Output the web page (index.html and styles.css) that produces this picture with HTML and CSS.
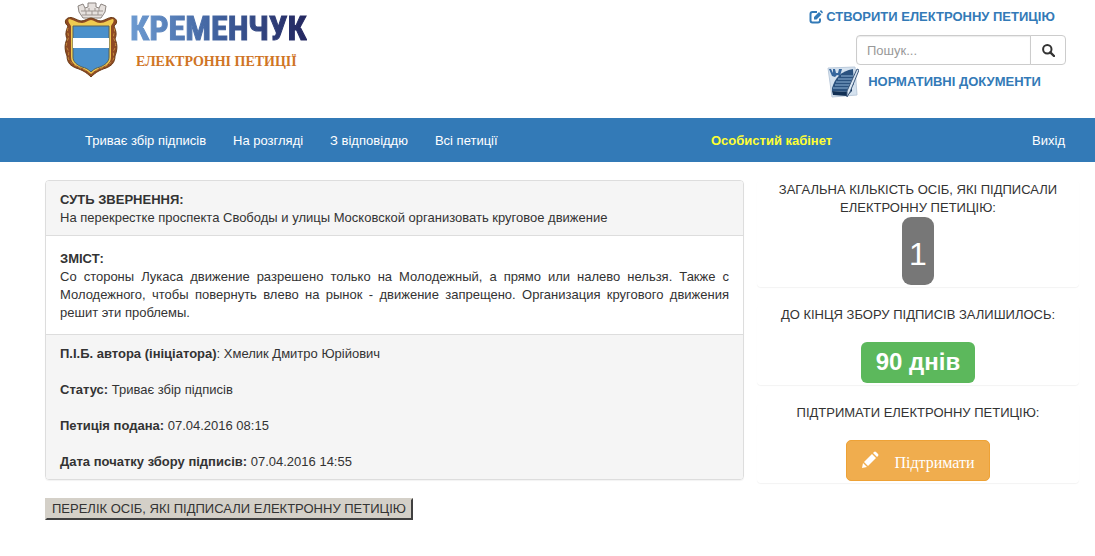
FILE: index.html
```html
<!DOCTYPE html>
<html lang="uk">
<head>
  <meta charset="UTF-8">
  <meta name="viewport" content="width=device-width, initial-scale=1">
  <title>Електронні петиції - Кременчук</title>
  <link rel="stylesheet" href="styles.css">
</head>
<body>
  <header class="header">
    <a href="#" class="logo">
      <svg class="logo-crest" viewBox="0 0 56 76" aria-hidden="true">
        <!-- crown -->
        <path d="M14 4l5-2 2 4 3-1V1h8v4l3 1 2-4 5 2-1 6-4 6H19l-4-6z" fill="#e6e1de" stroke="#8b8480" stroke-width="1"/>
        <path d="M17 9h22M18 13h20M21 6v3M25 6v3M31 6v3M35 6v3M22 9v4M28 9v4M34 9v4" stroke="#9d9591" stroke-width="1" fill="none"/>
        <!-- cartouche -->
        <path d="M4 16c4-2 8 2 13 3 4 0 7-3 10-3s6 3 10 3c5-1 9-5 13-3 4 2 3 6 0 8 2 5 3 8 1 13 3 6 2 12 0 17 0 7-4 10-9 12-6 2-10 4-15 9-5-5-9-7-15-9-5-2-9-5-9-12-2-5-3-11 0-17-2-5-1-8 1-13-3-2-4-6 0-8z" fill="#8f4a24" stroke="#6b3d16" stroke-width="1"/>
        <path d="M4 26c-2 4 2 7 0 11s-2 8 0 11-1 7 1 10 5 5 9 7 9 3 13 7c4-4 9-5 13-7s7-4 9-7-1-7 1-10 2-7 0-11 2-7 0-11" fill="none" stroke="#c58a3c" stroke-width="1" stroke-dasharray="3 2"/>
        <path d="M5 17c3 0 8 4 13 4 4 0 6-3 9-3s5 3 9 3c5 0 10-4 13-4 2 2-1 5-2 7v31c0 7-6 9-11 11-4 2-6 3-9 6-3-3-5-4-9-6-5-2-11-4-11-11V24c-1-2-4-5-2-7z" fill="#f0cb50"/>
        <!-- shield -->
        <path d="M9 24h36v31c0 5-4 8-9 10-4 1-6 2-9 5-3-3-5-4-9-5-5-2-9-5-9-10z" fill="#4a90cb" stroke="#56615c" stroke-width="1"/>
        <path d="M9 36h36v10H9z" fill="#fff"/>
      </svg>
      <span class="logo-text">
        <span class="logo-city">КРЕМЕНЧУК</span>
        <span class="logo-caption">ЕЛЕКТРОННІ ПЕТИЦІЇ</span>
      </span>
    </a>

    <div class="tools">
      <a href="#" class="tools-link">
        <svg class="icon-edit" viewBox="0 0 14 14" aria-hidden="true">
          <path d="M8 2H3.500Q1.500 2 1.500 4v6.500q0 2 2 2H9q2 0 2-2V8.500" fill="none" stroke="currentColor" stroke-width="2"/>
          <path d="M5 9.500V7l5-5 2.500 2.500-5 5zM10.800 1.200L12 0l2 2.200-1 1.200z" fill="currentColor"/>
        </svg>
        СТВОРИТИ ЕЛЕКТРОННУ ПЕТИЦІЮ
      </a>
      <form class="search">
        <input type="text" class="search-input" placeholder="Пошук..." aria-label="Пошук">
        <button type="submit" class="search-btn" aria-label="Шукати">
          <svg viewBox="0 0 13 13" aria-hidden="true">
            <circle cx="5.300" cy="5.300" r="4.200" fill="none" stroke="#333" stroke-width="2"/>
            <path d="M8.300 8.300l3.700 3.700" stroke="#333" stroke-width="2.400" stroke-linecap="round"/>
          </svg>
        </button>
      </form>
      <a href="#" class="tools-link tools-docs">
        <svg class="icon-docs" viewBox="0 0 32 34" aria-hidden="true">
          <path d="M1 3l27-1 2 28-25 2z" fill="#d5e2ef" stroke="#bccbdc" stroke-width="1"/>
          <path d="M2 4l3 7 3 1 2-2 3 1 2-7-3 0-1 4-2 0-1-4-2 0 0 4-2-4z" fill="#34659c"/>
          <path d="M5 23C8 13 14 6 26 4l1 15-6 8-16-1z" fill="#2b527f"/>
          <path d="M14 11h12M11 14h15M9 17h17M8 20h16M6 23h17" stroke="#8fb2d6" stroke-width="1"/>
          <path d="M5 26l15 1 5-6v5l-5 5-14-1z" fill="#123055"/>
          <path d="M30 4l2 1-9 22-3 5v-6z" fill="#dbe7f3" stroke="#405b7e" stroke-width="1"/>
        </svg>
        НОРМАТИВНІ ДОКУМЕНТИ
      </a>
    </div>
  </header>

  <nav class="navbar">
    <div class="nav-main">
      <a href="#">Триває збір підписів</a>
      <a href="#">На розгляді</a>
      <a href="#">З відповіддю</a>
      <a href="#">Всі петиції</a>
    </div>
    <div class="nav-user">
      <a href="#" class="nav-cabinet">Особистий кабінет</a>
      <a href="#">Вихід</a>
    </div>
  </nav>

  <div class="container">
    <main class="content">
      <article class="panel">
        <div class="panel-heading">
          <strong>СУТЬ ЗВЕРНЕННЯ:</strong><br>
          На перекрестке проспекта Свободы и улицы Московской организовать круговое движение
        </div>
        <div class="panel-body">
          <strong>ЗМІСТ:</strong>
          <p>Со стороны Лукаса движение разрешено только на Молодежный, а прямо или налево нельзя. Также с Молодежного, чтобы повернуть влево на рынок - движение запрещено. Организация кругового движения решит эти проблемы.</p>
        </div>
        <div class="panel-footer">
          <p><strong>П.І.Б. автора (ініціатора)</strong>: Хмелик Дмитро Юрійович</p>
          <p><strong>Статус:</strong> Триває збір підписів</p>
          <p><strong>Петиція подана:</strong> 07.04.2016 08:15</p>
          <p><strong>Дата початку збору підписів:</strong> 07.04.2016 14:55</p>
        </div>
      </article>
      <button type="button" class="list-btn">ПЕРЕЛІК ОСІБ, ЯКІ ПІДПИСАЛИ ЕЛЕКТРОННУ ПЕТИЦІЮ</button>
    </main>

    <aside class="sidebar">
      <div class="side-panel">
        <p>ЗАГАЛЬНА КІЛЬКІСТЬ ОСІБ, ЯКІ ПІДПИСАЛИ ЕЛЕКТРОННУ ПЕТИЦІЮ:</p>
        <span class="badge">1</span>
      </div>
      <div class="side-panel side-panel-spaced">
        <p>ДО КІНЦЯ ЗБОРУ ПІДПИСІВ ЗАЛИШИЛОСЬ:</p>
        <span class="label-success">90 днів</span>
      </div>
      <div class="side-panel side-panel-spaced">
        <p>ПІДТРИМАТИ ЕЛЕКТРОННУ ПЕТИЦІЮ:</p>
        <button type="button" class="btn-support">
          <svg viewBox="0 0 18 18" aria-hidden="true">
            <path d="M1 17l1-5 4 4zM3 11l8-8 4 4-8 8zM12 2l1-1q1-1 2 0l2 2q1 1 0 2l-1 1z" fill="#fff"/>
          </svg>
          Підтримати
        </button>
      </div>
    </aside>
  </div>
</body>
</html>
```
FILE: styles.css
```css
* {
  box-sizing: border-box;
}
body {
  margin: 0;
  background: #fff;
  color: #333;
  font-family: "Liberation Sans", Arial, sans-serif;
  font-size: 13px;
  line-height: 18px;
}
p {
  margin: 0;
}
a {
  color: #337ab7;
  text-decoration: none;
}

/* header */
.header {
  display: flex;
  justify-content: space-between;
  align-items: flex-start;
  min-height: 118px;
  padding: 0 29px 0 64px;
}
.logo {
  display: flex;
  gap: 10px;
  padding-top: 2px;
}
.logo-crest {
  width: 56px;
  height: 76px;
}
.logo-text {
  display: flex;
  flex-direction: column;
  padding-top: 8px;
}
.logo-city {
  font-family: "Liberation Sans Narrow", "Roboto Condensed", "Liberation Sans", sans-serif;
  font-size: 34px;
  font-weight: bold;
  line-height: 36px;
  background: linear-gradient(90deg, #6d9bd1, #3f609d 50%, #23265f);
  -webkit-background-clip: text;
  background-clip: text;
  color: transparent;
  -webkit-text-stroke: 1px transparent;
}
.logo-caption {
  padding: 7px 0 0 6px;
  font-family: "Liberation Serif", "Times New Roman", serif;
  font-size: 14px;
  font-weight: bold;
  color: #cf7424;
}
.tools {
  display: flex;
  flex-direction: column;
  align-items: center;
  width: 268px;
  padding-top: 8px;
}
.tools-link {
  display: flex;
  align-items: center;
  gap: 3px;
  font-weight: bold;
}
.icon-edit {
  width: 14px;
  height: 14px;
}
.search {
  display: flex;
  align-self: flex-end;
  margin-top: 9px;
}
.search-input {
  width: 175px;
  height: 30px;
  padding: 5px 10px;
  border: 1px solid #ccc;
  border-radius: 4px 0 0 4px;
  box-shadow: inset 0 1px 1px rgba(0, 0, 0, 0.08);
  font: inherit;
}
.search-input::placeholder {
  color: #999;
}
.search-btn {
  display: flex;
  align-items: center;
  justify-content: center;
  width: 36px;
  margin-left: -1px;
  padding: 0;
  border: 1px solid #ccc;
  border-radius: 0 4px 4px 0;
  background: #fff;
  cursor: pointer;
}
.search-btn svg {
  width: 13px;
  height: 13px;
}
.tools-docs {
  gap: 9px;
  align-items: flex-start;
  padding-left: 4px;
  line-height: 34px;
}
.icon-docs {
  width: 32px;
  height: 34px;
}

/* navbar */
.navbar {
  display: flex;
  justify-content: space-between;
  padding: 14px 30px 12px 85px;
  background: #337ab7;
}
.navbar a {
  color: #fff;
}
.nav-main {
  display: flex;
  gap: 27px;
}
.nav-user {
  display: flex;
  justify-content: space-between;
  width: 354px;
}
.navbar .nav-cabinet {
  color: #ff3;
  font-weight: bold;
}

/* petition */
.container {
  display: flex;
  gap: 13px;
  padding: 18px 16px 18px 45px;
}
.content {
  flex: 1;
}
.panel {
  margin-bottom: 18px;
  border: 1px solid #ddd;
  border-radius: 4px;
  box-shadow: 0 1px 1px rgba(0, 0, 0, 0.05);
  overflow: hidden;
}
.panel-heading {
  padding: 10px 14px 8px;
  background: #f5f5f5;
  border-bottom: 1px solid #ddd;
}
.panel-body {
  padding: 14px 14px 12px;
  text-align: justify;
}
.panel-footer {
  display: flex;
  flex-direction: column;
  gap: 18px;
  padding: 10px 14px 8px;
  background: #f5f5f5;
  border-top: 1px solid #ddd;
}
.list-btn {
  padding: 0 5px;
  border: 2px solid;
  border-color: #d4d0c8 #404040 #404040 #d4d0c8;
  background: #d4d0c8;
  color: #333;
  font: inherit;
  cursor: pointer;
}

/* sidebar */
.sidebar {
  width: 322px;
  text-align: center;
}
.side-panel {
  display: flex;
  flex-direction: column;
  align-items: center;
  margin-bottom: 18px;
  padding-bottom: 1px;
  border: 1px solid transparent;
  border-radius: 4px;
  box-shadow: 0 1px 1px rgba(0, 0, 0, 0.05);
}
.side-panel-spaced {
  gap: 18px;
}
.badge {
  padding: 19px 7px 13px;
  border-radius: 9px;
  background: #777;
  color: #fff;
  font-size: 32px;
  line-height: 36px;
}
.label-success {
  padding: 6px 15px 7px;
  border-radius: 6px;
  background: #5cb85c;
  color: #fff;
  font-size: 24px;
  font-weight: bold;
  line-height: 28px;
}
.btn-support {
  display: flex;
  align-items: center;
  gap: 15px;
  height: 41px;
  padding: 4px 14px 0;
  border: 1px solid #eea236;
  border-radius: 5px;
  background: #f0ad4e;
  color: #fff;
  font-family: "Liberation Serif", "Times New Roman", serif;
  font-size: 16px;
  cursor: pointer;
}
.btn-support svg {
  width: 18px;
  height: 18px;
  margin-bottom: 6px;
}
```
